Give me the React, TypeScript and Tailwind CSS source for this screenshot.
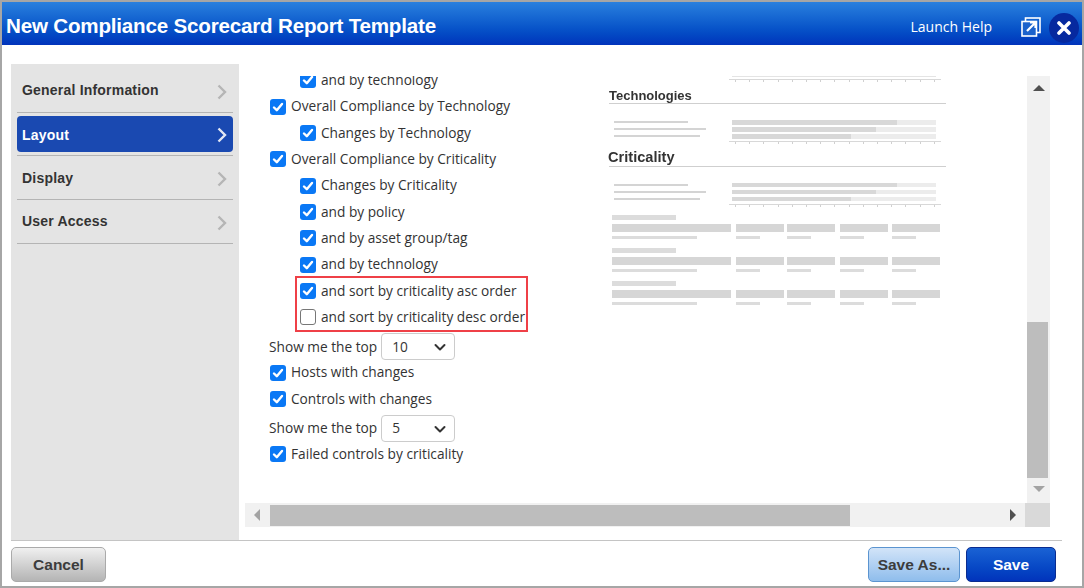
import React from "react";

const Check = ({ on = true }: { on?: boolean }) =>
  on ? (
    <span className="w-[16px] h-[16px] shrink-0 rounded-[3px] bg-[#0a78f5] flex items-center justify-center">
      <svg width="12" height="12" viewBox="0 0 12 12" fill="none" stroke="#fff" strokeWidth="2.4" strokeLinecap="round" strokeLinejoin="round">
        <path d="M2 6.5 L4.8 9.2 L10 3" />
      </svg>
    </span>
  ) : (
    <span className="w-[16px] h-[16px] shrink-0 rounded-[3px] bg-white border border-[#777]" />
  );

const Row = ({ text, nested, on = true }: { text: string; nested?: boolean; on?: boolean }) => (
  <div className={`h-[26.33px] flex items-center gap-[5px] text-[13.7px] text-[#333] ${nested ? "pl-[55px]" : "pl-[25px]"}`}>
    <Check on={on} />
    <span className="whitespace-nowrap">{text}</span>
  </div>
);

const TopSelect = ({ value }: { value: string }) => (
  <div className="h-[29px] mt-[2px] -mb-[2px] pl-[24px] flex items-center gap-[4px] text-[13.7px] text-[#333]">
    <span className="whitespace-nowrap">Show me the top</span>
    <span className="w-[74px] h-[27px] border border-[#ccc] rounded-[4px] flex items-center justify-between pl-[10px] pr-[7px] bg-white">
      <span>{value}</span>
      <svg width="14" height="14" viewBox="0 0 14 14" fill="none" stroke="#333" strokeWidth="2" strokeLinecap="round" strokeLinejoin="round">
        <path d="M2.5 5 L7 9.5 L11.5 5" />
      </svg>
    </span>
  </div>
);

const Chevron = ({ color }: { color: string }) => (
  <svg width="10" height="16" viewBox="0 0 10 16" fill="none" stroke={color} strokeWidth="2.4">
    <path d="M1.5 1.5 L8 8 L1.5 14.5" />
  </svg>
);

const NavItem = ({ label, active }: { label: string; active?: boolean }) => (
  <div className="mt-[3px]">
    <div
      className={`flex items-center justify-between pl-[5px] pr-[6px] font-bold text-[14px] tracking-[0.2px] h-[36.67px] rounded-[4px] ${
        active ? "bg-[#1a49b1] text-white" : "text-[#333]"
      }`}
    >
      <span className={active ? "mt-[3px]" : "mt-[1px]"}>{label}</span>
      <span className="mt-[3px]">
        <Chevron color={active ? "#e4e8f4" : "#b5b5b5"} />
      </span>
    </div>
    <div className="h-[1px] bg-[#b4b4b4] mt-[3px]" />
  </div>
);

const Axis = () => (
  <div className="ml-[121px] w-[212px] h-[4px] border-t border-[#d8d8d8] flex justify-between px-[6px]">
    {Array.from({ length: 15 }).map((_, i) => (
      <span key={i} className="w-[1px] h-[2px] bg-[#d0d0d0]" />
    ))}
  </div>
);

const SummaryChart = () => (
  <div className="flex flex-col gap-[2.5px]">
    {[
      [74, 165],
      [92, 144],
      [86, 119],
    ].map(([label, fill], i) => (
      <div key={i} className="h-[4.5px] flex items-center">
        <span className="ml-[6px] h-[2px] bg-[#d4d4d4]" style={{ width: label }} />
        <span className="flex-1" />
        <span className="w-[204px] h-[4.5px] bg-[#ececec] mr-[10px] flex">
          <span className="h-full bg-[#d8d8d8]" style={{ width: fill }} />
        </span>
      </div>
    ))}
  </div>
);

const TableGroup = () => (
  <div className="pl-[4px]">
    <div className="w-[64px] h-[4.5px] bg-[#dcdcdc]" />
    <div className="flex mt-[4px]">
      <span className="w-[119px] h-[8.5px] bg-[#d6d6d6]" />
      <span className="w-[48px] h-[8.5px] bg-[#d6d6d6] ml-[5px]" />
      <span className="w-[48px] h-[8.5px] bg-[#d6d6d6] ml-[3px]" />
      <span className="w-[48px] h-[8.5px] bg-[#d6d6d6] ml-[5px]" />
      <span className="w-[48px] h-[8.5px] bg-[#d6d6d6] ml-[4px]" />
    </div>
    <div className="flex mt-[3.5px]">
      <span className="w-[85px] h-[3.5px] bg-[#dcdcdc]" />
      <span className="w-[24px] h-[3.5px] bg-[#dcdcdc] ml-[39px]" />
      <span className="w-[24px] h-[3.5px] bg-[#dcdcdc] ml-[27px]" />
      <span className="w-[24px] h-[3.5px] bg-[#dcdcdc] ml-[29px]" />
      <span className="w-[24px] h-[3.5px] bg-[#dcdcdc] ml-[28px]" />
    </div>
  </div>
);

const Preview = () => (
  <div className="w-[338px] shrink-0 blur-[0.4px] font-['Liberation_Sans',sans-serif]">
    <div className="ml-[124px] w-[204px] h-[1px] bg-[#e4e4e4]" />
    <div className="mt-[2px]"><Axis /></div>
    <div className="mt-[5px] h-[15px] text-[13px] font-bold text-[#333] leading-[15px] pl-[1px]">Technologies</div>
    <div className="h-[1px] bg-[#cfcfcf] ml-[1px]" />
    <div className="mt-[16px]"><SummaryChart /></div>
    <div className="mt-[2.5px]"><Axis /></div>
    <div className="mt-[3.5px] h-[17px] text-[14.6px] font-bold text-[#333] leading-[17px]">Criticality</div>
    <div className="h-[1px] bg-[#cfcfcf] ml-[1px]" />
    <div className="mt-[16px]"><SummaryChart /></div>
    <div className="mt-[2.5px]"><Axis /></div>
    <div className="mt-[7.5px] flex flex-col gap-[9px]">
      <TableGroup />
      <TableGroup />
      <TableGroup />
    </div>
  </div>
);

const Arrow = ({ dir, color }: { dir: "up" | "down" | "left" | "right"; color: string }) => {
  const d = { up: "M0 8 L6 2 L12 8 Z", down: "M0 3 L12 3 L6 9 Z", left: "M8 0 L8 12 L2 6 Z", right: "M3 0 L3 12 L9 6 Z" }[dir];
  return (
    <svg width="12" height="12" viewBox="0 0 12 12" fill={color}>
      <path d={d} />
    </svg>
  );
};

export default function App() {
  return (
    <div className="w-[1084px] h-[588px] border-2 border-[#a6a6a6] bg-white flex flex-col font-['Liberation_Sans',sans-serif] overflow-hidden">
      <header className="h-[43px] shrink-0 bg-gradient-to-b from-[#2a80de] to-[#0233bb] flex items-center pl-[4px] pr-[3px] text-white">
        <h1 className="text-[20.6px] tracking-[-0.2px] font-bold leading-none flex-1 whitespace-nowrap mt-[5px]">New Compliance Scorecard Report Template</h1>
        <span className="text-[14px] font-['Open_Sans',sans-serif] mt-[6px] mr-[29px]">Launch Help</span>
        <svg width="20" height="20" viewBox="0 0 20 20" className="mt-[7px] mr-[8px]" fill="none" stroke="#fff" strokeWidth="1.6">
          <rect x="4.5" y="1" width="14.5" height="14.5" />
          <rect x="1" y="4.5" width="14.5" height="14.5" fill="#1b62cc" />
          <path d="M6 14 L14 6 M9 5.5 H14.5 V11" strokeWidth="2.2" />
        </svg>
        <span className="w-[30px] h-[30px] mt-[9px] rounded-full bg-[#06299f] flex items-center justify-center">
          <svg width="14" height="14" viewBox="0 0 14 14" stroke="#fff" strokeWidth="3.6" strokeLinecap="round">
            <path d="M2 2 L12 12 M12 2 L2 12" />
          </svg>
        </span>
      </header>

      <main className="flex-1 flex min-h-0 pl-[9px] pr-[32px] pt-[19px]">
        <aside className="w-[228px] shrink-0 bg-[#e4e4e4] px-[6px] pt-[5px]">
          <NavItem label="General Information" />
          <NavItem label="Layout" active />
          <NavItem label="Display" />
          <NavItem label="User Access" />
        </aside>

        <section className="ml-[6px] mt-[12px] mb-[13px] flex-1 min-w-0 grid grid-cols-[782px_23px] grid-rows-[427px_24px]">
          <div className="overflow-hidden flex">
            <div className="w-[363px] shrink-0 -mt-[8.8px] font-['Open_Sans',sans-serif]">
              <Row nested text="and by technology" />
              <Row text="Overall Compliance by Technology" />
              <Row nested text="Changes by Technology" />
              <Row text="Overall Compliance by Criticality" />
              <Row nested text="Changes by Criticality" />
              <Row nested text="and by policy" />
              <Row nested text="and by asset group/tag" />
              <Row nested text="and by technology" />
              <div className="relative">
                <Row nested text="and sort by criticality asc order" />
                <Row nested on={false} text="and sort by criticality desc order" />
                <div className="absolute left-[50px] w-[233px] -top-[1.5px] h-[56px] border-2 border-[#ef4047]" />
              </div>
              <TopSelect value="10" />
              <Row text="Hosts with changes" />
              <Row text="Controls with changes" />
              <TopSelect value="5" />
              <Row text="Failed controls by criticality" />
            </div>
            <Preview />
          </div>

          <div className="bg-[#f1f1f1] flex flex-col items-start">
            <div className="h-[26px] w-full flex items-center justify-center"><Arrow dir="up" color="#505050" /></div>
            <div className="flex-1" />
            <div className="w-[21px] h-[156px] bg-[#bdbdbd]" />
            <div className="h-[25px] pb-[3px] w-full flex items-center justify-center"><Arrow dir="down" color="#a3a3a3" /></div>
          </div>

          <div className="bg-[#f1f1f1] flex items-center">
            <div className="w-[25px] flex items-center justify-center"><Arrow dir="left" color="#a3a3a3" /></div>
            <div className="w-[580px] h-[21px] bg-[#bdbdbd]" />
            <div className="flex-1" />
            <div className="w-[25px] flex items-center justify-center mr-[2px]"><Arrow dir="right" color="#505050" /></div>
          </div>
          <div className="bg-[#d9d9d9] -ml-[2px]" />
        </section>
      </main>

      <footer className="ml-[9px] mr-[20px] h-[46px] shrink-0 border-t border-[#c4c4c4] flex items-center justify-between pr-[6px] font-bold text-[15.5px]">
        <button className="w-[95px] h-[35px] mt-[2px] rounded-[5px] border border-[#aaa] bg-gradient-to-b from-[#f0f0f0] to-[#b4b4b4] text-[#3c3c3c]">Cancel</button>
        <div className="flex gap-[6px] mt-[2px]">
          <button className="w-[92px] h-[35px] rounded-[5px] border border-[#5b94d0] bg-gradient-to-b from-[#d2e4f8] to-[#8fbdec] text-[#3c3c3c]">Save As...</button>
          <button className="w-[90px] h-[35px] rounded-[5px] border border-[#0a2c90] bg-gradient-to-b from-[#1a62d4] to-[#0233bb] text-white">Save</button>
        </div>
      </footer>
    </div>
  );
}
